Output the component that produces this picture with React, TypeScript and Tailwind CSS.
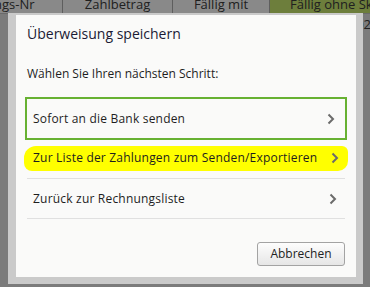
function Chevron() {
  return (
    <svg width="8" height="12" viewBox="0 0 8 12" className="shrink-0">
      <path d="M1.5 1.5 L6 6 L1.5 10.5" fill="none" stroke="#6b6b6b" strokeWidth="2" />
    </svg>
  );
}

export default function App() {
  return (
    <div
      className="relative w-[370px] h-[287px] overflow-hidden bg-[#7b7b7b] text-[#1e1e1e]"
      style={{ fontFamily: '"Segoe UI", "Open Sans", sans-serif' }}
    >
      {/* table behind the dialog */}
      <div className="flex h-[14px] overflow-hidden text-[13px] leading-[14px] text-[#202020] bg-[#898989] border-b border-[#6a6a6a]">
        <div className="shrink-0 w-[77px] -ml-[14px] border-r border-[#5e5e5e] whitespace-nowrap -mt-[3px]">ungs-Nr</div>
        <div className="shrink-0 w-[110px] border-r border-[#5e5e5e] text-center -mt-[3px]">Zahlbetrag</div>
        <div className="shrink-0 w-[97px] border-r border-[#5e5e5e] text-center -mt-[3px]">Fällig mit</div>
        <div className="flex-1 min-w-0 bg-[#6d7e3c] pl-[20px] whitespace-nowrap overflow-hidden -mt-[3px]">Fällig ohne Skonto</div>
      </div>
      <div className="flex justify-end h-[22px] items-center text-[13px]">
        <span className="shrink-0 -mr-[1px] text-[#202020]">1.002</span>
      </div>

      {/* dialog */}
      <div className="absolute left-[8px] top-[13px] w-[355px] h-[271px] bg-[#cacaca] pt-[2px] pl-[8px] pr-[7px] pb-[7px]">
        <div className="h-full bg-[#fafaf9] px-[9px] flex flex-col">
          <div className="pl-[2px] pt-[8px] h-[40px] text-[14px] text-[#1b1b35]">Überweisung speichern</div>
          <div className="pl-[2px] pt-[10px] h-[42px] text-[12px]">Wählen Sie Ihren nächsten Schritt:</div>

          <div className="h-[43px] border-2 border-[#67b132] flex items-center justify-between pl-[6px] pr-[10px] text-[12px] tracking-[0.2px]">
            <span>Sofort an die Bank senden</span>
            <Chevron />
          </div>

          <div className="mx-[2px] h-[39px] border-b border-[#e0e0e0] flex items-center">
            <div className="flex-1 h-[25px] -mx-[3px] mt-[-2px] bg-[#ffff00] rounded-[12px_6px_10px_8px] flex items-center justify-between pl-[9px] pr-[9px] text-[12px] tracking-[0.2px]">
              <span>Zur Liste der Zahlungen zum Senden/Exportieren</span>
              <Chevron />
            </div>
          </div>

          <div className="mx-[2px] h-[40px] border-b border-[#e0e0e0] flex items-center justify-between pl-[6px] pr-[8px] text-[12px] tracking-[0.2px]">
            <span>Zurück zur Rechnungsliste</span>
            <Chevron />
          </div>

          <div className="flex justify-end pt-[23px] pr-[2px]">
            <button className="w-[88px] h-[24px] rounded-[3px] border border-[#a3a3a3] bg-gradient-to-b from-[#fdfdfd] to-[#e6e6e6] text-[12px] text-[#222]">
              Abbrechen
            </button>
          </div>
        </div>
      </div>
    </div>
  );
}
